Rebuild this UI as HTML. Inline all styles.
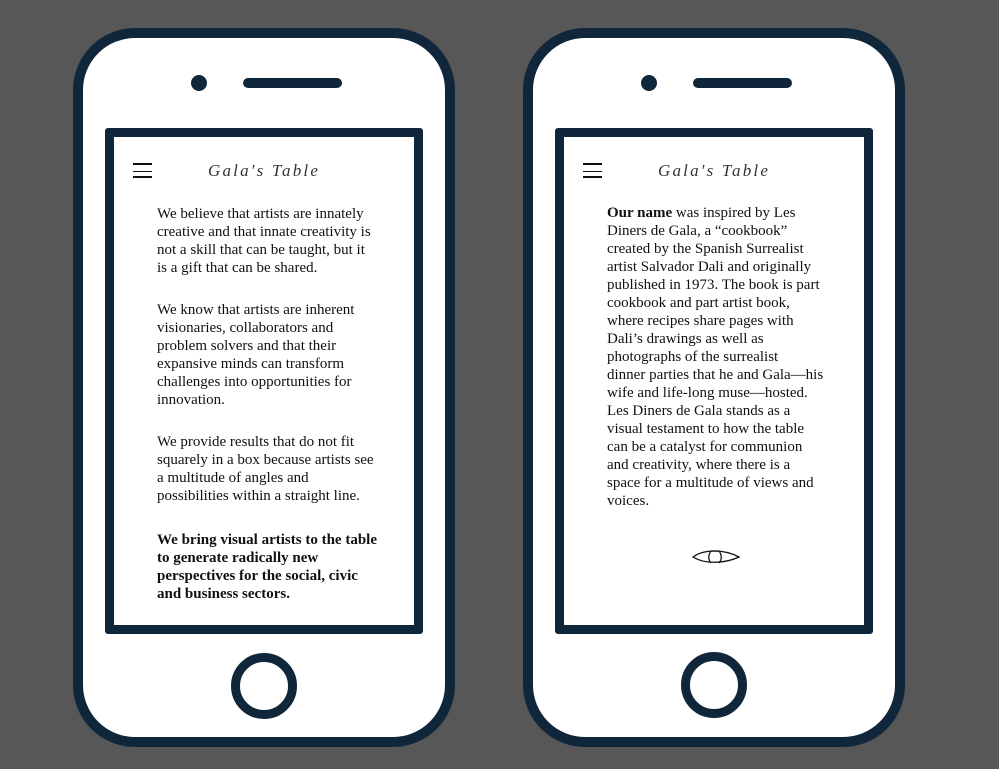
<!DOCTYPE html>
<html><head><meta charset="utf-8"><style>
html,body{margin:0;padding:0;}
body{width:999px;height:769px;background:#575757;position:relative;overflow:hidden;font-family:"Liberation Serif",serif;}
.phone{position:absolute;top:28px;width:362px;height:699px;border:10px solid #10263b;border-radius:62px;background:#fff;}
.dot{position:absolute;width:16px;height:16px;border-radius:50%;background:#10263b;}
.spk{position:absolute;height:10px;width:99px;border-radius:5px;background:#10263b;}
.scr{position:absolute;top:128px;width:300px;height:488px;border:9px solid #10263b;border-radius:3px;background:#fff;}
.home{position:absolute;width:48px;height:48px;border:9px solid #10263b;border-radius:50%;background:#fff;}
.ham{position:absolute;width:19px;height:15px;border-top:2px solid #111;border-bottom:2px solid #111;box-sizing:border-box;}
.ham:after{content:"";position:absolute;left:0;right:0;top:5.5px;border-top:1.6px solid #111;}
.title{position:absolute;font-style:italic;font-size:17px;letter-spacing:2.2px;color:#333;white-space:nowrap;}
.l{position:absolute;font-size:15px;line-height:18px;height:18px;white-space:nowrap;color:#111;}
b{font-weight:bold;}
</style></head><body>
<div class="phone" style="left:73px;"></div>
<div class="phone" style="left:523px;"></div>
<div class="dot" style="left:191px;top:75px;"></div>
<div class="spk" style="left:243px;top:78px;"></div>
<div class="dot" style="left:641px;top:75px;"></div>
<div class="spk" style="left:693px;top:78px;"></div>
<div class="scr" style="left:105px;"></div>
<div class="scr" style="left:555px;"></div>
<div class="home" style="left:231px;top:653px;"></div>
<div class="home" style="left:681px;top:652px;"></div>
<div class="ham" style="left:133px;top:163px;"></div>
<div class="ham" style="left:583px;top:163px;"></div>
<div class="title" style="left:208px;top:161px;">Gala's Table</div>
<div class="title" style="left:658px;top:161px;">Gala's Table</div>

<div class="l" style="left:157px;top:205px;">We believe that artists are innately</div>
<div class="l" style="left:157px;top:223px;">creative and that innate creativity is</div>
<div class="l" style="left:157px;top:241px;">not a skill that can be taught, but it</div>
<div class="l" style="left:157px;top:259px;">is a gift that can be shared.</div>
<div class="l" style="left:157px;top:301px;">We know that artists are inherent</div>
<div class="l" style="left:157px;top:319px;">visionaries, collaborators and</div>
<div class="l" style="left:157px;top:337px;">problem solvers and that their</div>
<div class="l" style="left:157px;top:355px;">expansive minds can transform</div>
<div class="l" style="left:157px;top:373px;">challenges into opportunities for</div>
<div class="l" style="left:157px;top:391px;">innovation.</div>
<div class="l" style="left:157px;top:433px;">We provide results that do not fit</div>
<div class="l" style="left:157px;top:451px;">squarely in a box because artists see</div>
<div class="l" style="left:157px;top:469px;">a multitude of angles and</div>
<div class="l" style="left:157px;top:487px;">possibilities within a straight line.</div>
<div class="l" style="left:157px;top:531px;"><b>We bring visual artists to the table</b></div>
<div class="l" style="left:157px;top:549px;"><b>to generate radically new</b></div>
<div class="l" style="left:157px;top:567px;"><b>perspectives for the social, civic</b></div>
<div class="l" style="left:157px;top:585px;"><b>and business sectors.</b></div>

<div class="l" style="left:607px;top:204px;"><b>Our name</b> was inspired by Les</div>
<div class="l" style="left:607px;top:222px;">Diners de Gala, a “cookbook”</div>
<div class="l" style="left:607px;top:240px;">created by the Spanish Surrealist</div>
<div class="l" style="left:607px;top:258px;">artist Salvador Dali and originally</div>
<div class="l" style="left:607px;top:276px;">published in 1973. The book is part</div>
<div class="l" style="left:607px;top:294px;">cookbook and part artist book,</div>
<div class="l" style="left:607px;top:312px;">where recipes share pages with</div>
<div class="l" style="left:607px;top:330px;">Dali’s drawings as well as</div>
<div class="l" style="left:607px;top:348px;">photographs of the surrealist</div>
<div class="l" style="left:607px;top:366px;">dinner parties that he and Gala—his</div>
<div class="l" style="left:607px;top:384px;">wife and life-long muse—hosted.</div>
<div class="l" style="left:607px;top:402px;">Les Diners de Gala stands as a</div>
<div class="l" style="left:607px;top:420px;">visual testament to how the table</div>
<div class="l" style="left:607px;top:438px;">can be a catalyst for communion</div>
<div class="l" style="left:607px;top:456px;">and creativity, where there is a</div>
<div class="l" style="left:607px;top:474px;">space for a multitude of views and</div>
<div class="l" style="left:607px;top:492px;">voices.</div>

<svg style="position:absolute;left:690px;top:546px" width="52" height="22" viewBox="0 0 52 22">
<path d="M3 11 C14 3 34 3 49 11 C36 17 16 19 3 11 Z" fill="none" stroke="#111" stroke-width="1.3"/>
<path d="M21 5 C18 9 18 14 21 17 M29 5 C32 9 32 14 29 17 M21 5 L29 5" fill="none" stroke="#111" stroke-width="1.3"/>
</svg>
</body></html>
